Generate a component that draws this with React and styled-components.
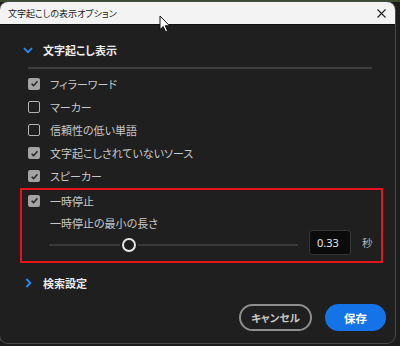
import React from "react";
import styled, { createGlobalStyle } from "styled-components";

const Global = createGlobalStyle`
  html, body { margin: 0; padding: 0; background: #1c1c1c; }
  body { width: 400px; height: 346px; overflow: hidden; font-family: "Noto Sans CJK JP", "Noto Sans", sans-serif; }
  * { box-sizing: border-box; }
`;

const Stage = styled.div`
  position: relative;
  width: 400px;
  height: 346px;
  padding-top: 2px;
  background: linear-gradient(to bottom, #3b4a2e 0, #3b4a2e 2px, #1c1c1c 2px);
`;

const Window = styled.div`
  width: 395px;
  height: 341px;
  border-radius: 8px;
  overflow: hidden;
  background: #1f1f1f;
  box-shadow: 0 0 0 1px #4a4a4a;
  display: flex;
  flex-direction: column;
  font-feature-settings: "palt";
`;

const TitleBar = styled.div`
  height: 23px;
  background: #f3f3f3;
  border-bottom: 1px solid #111;
  display: flex;
  align-items: center;
  justify-content: space-between;
  padding: 0 6px 0 8px;
  flex-shrink: 0;
`;

const Title = styled.span`
  font-size: 9px;
  color: #1a1a1a;
  line-height: 1;
`;

const CloseBtn = styled.div`
  width: 16px;
  height: 16px;
  display: flex;
  align-items: center;
  justify-content: center;
`;

const Body = styled.div`
  flex: 1;
  display: flex;
  flex-direction: column;
  padding: 15px 12px 12px 20px;
`;

const SectionHeader = styled.div`
  height: 20px;
  display: flex;
  align-items: center;
  gap: ${(p) => p.$gap || 10}px;
  padding-left: ${(p) => p.$indent || 3}px;
  margin-top: ${(p) => p.$mt || 0}px;
  color: #ececec;
  font-size: 11px;
  font-weight: 700;
`;

const Separator = styled.div`
  height: 2px;
  background: #3d3d3d;
  margin: 7px 11px 0 8px;
`;

const List = styled.div`
  margin-top: 3px;
  display: flex;
  flex-direction: column;
`;

const Row = styled.div`
  height: ${(p) => p.$h || 23.2}px;
  display: flex;
  align-items: center;
  gap: 10px;
  padding-left: ${(p) => p.$pl ?? 8}px;
  color: #c8c8c8;
  font-size: 11px;
`;

const Box = styled.span`
  width: 12px;
  height: 12px;
  border-radius: 2px;
  flex-shrink: 0;
  display: flex;
  align-items: center;
  justify-content: center;
  background: ${(p) => (p.$checked ? "#a3a3a3" : "transparent")};
  border: ${(p) => (p.$checked ? "none" : "1.6px solid #b4b4b4")};
`;

const Highlight = styled.div`
  border: 2px solid #e8141c;
  padding: 0 0 6px 6px;
  display: flex;
  flex-direction: column;
`;

const SubLabel = styled.div`
  height: 20px;
  margin-top: 1px;
  padding-left: 22px;
  display: flex;
  align-items: center;
  color: #c8c8c8;
  font-size: 11px;
`;

const SliderRow = styled.div`
  height: 25px;
  margin-top: -3px;
  display: flex;
  align-items: center;
  padding-left: 21px;
`;

const Track = styled.div`
  position: relative;
  width: 249px;
  height: 14px;
  margin-top: 6px;
  flex-shrink: 0;
`;

const TrackLine = styled.div`
  position: absolute;
  top: 6px;
  height: 2px;
  background: #3a3a3a;
`;

const Thumb = styled.div`
  position: absolute;
  top: 0;
  width: 14px;
  height: 14px;
  border-radius: 50%;
  border: 2px solid #e6e6e6;
  background: #1f1f1f;
`;

const NumberBox = styled.div`
  width: 42px;
  height: 25px;
  margin-left: 11px;
  background: #0b0b0b;
  border: 1px solid #363636;
  border-radius: 3px;
  display: flex;
  align-items: center;
  padding-left: 7px;
  color: #e4e4e4;
  font-family: "Noto Sans", "Liberation Sans", sans-serif;
  font-size: 11px;
`;

const Unit = styled.span`
  margin-left: 11px;
  color: #b8b8b8;
  font-size: 10.6px;
`;

const Footer = styled.div`
  margin-top: auto;
  display: flex;
  justify-content: flex-end;
  gap: 13px;
  margin-right: -3px;
`;

const Button = styled.button`
  height: 27px;
  width: ${(p) => p.$w}px;
  border-radius: 14px;
  font-family: inherit;
  font-feature-settings: "palt";
  font-weight: 700;
  font-size: ${(p) => (p.$primary ? 11.5 : 10.6)}px;
  display: flex;
  align-items: center;
  justify-content: center;
  padding: 0;
  background: ${(p) => (p.$primary ? "#1473e6" : "transparent")};
  color: ${(p) => (p.$primary ? "#ffffff" : "#c8c8c8")};
  border: ${(p) => (p.$primary ? "none" : "2px solid #8e8e8e")};
`;

const Cursor = styled.svg`
  position: absolute;
  left: 159px;
  top: 15px;
`;

const Check = () => (
  <svg width="9" height="9" viewBox="0 0 10 10">
    <path d="M1.8 5.2 L4 7.4 L8.3 2.6" fill="none" stroke="#262626" strokeWidth="1.7" />
  </svg>
);

const CheckBox = ({ checked }) => <Box $checked={checked}>{checked && <Check />}</Box>;

const ChevronDown = () => (
  <svg width="10" height="7" viewBox="0 0 10 7">
    <path d="M1 1.2 L5 5.2 L9 1.2" fill="none" stroke="#2b8cf0" strokeWidth="1.8" />
  </svg>
);

const ChevronRight = () => (
  <svg width="7" height="10" viewBox="0 0 7 10">
    <path d="M1.4 1 L5.4 5 L1.4 9" fill="none" stroke="#2b8cf0" strokeWidth="1.8" />
  </svg>
);

const items = [
  { label: "フィラーワード", checked: true },
  { label: "マーカー", checked: false },
  { label: "信頼性の低い単語", checked: false },
  { label: "文字起こしされていないソース", checked: true },
  { label: "スピーカー", checked: true },
];

export default function App() {
  const thumbX = 80;
  return (
    <Stage>
      <Global />
      <Window>
        <TitleBar>
          <Title>文字起こしの表示オプション</Title>
          <CloseBtn>
            <svg width="9" height="9" viewBox="0 0 9 9">
              <path d="M0.5 0.5 L8.5 8.5 M8.5 0.5 L0.5 8.5" stroke="#222" strokeWidth="1.1" />
            </svg>
          </CloseBtn>
        </TitleBar>
        <Body>
          <SectionHeader>
            <ChevronDown />
            <span>文字起こし表示</span>
          </SectionHeader>
          <Separator />
          <List>
            {items.map((it) => (
              <Row key={it.label}>
                <CheckBox checked={it.checked} />
                <span>{it.label}</span>
              </Row>
            ))}
          </List>
          <Highlight>
            <Row $h={22} $pl={0}>
              <CheckBox checked />
              <span>一時停止</span>
            </Row>
            <SubLabel>一時停止の最小の長さ</SubLabel>
            <SliderRow>
              <Track>
                <TrackLine style={{ left: 0, width: thumbX - 9 }} />
                <Thumb style={{ left: thumbX - 7 }} />
                <TrackLine style={{ left: thumbX + 9, right: 0 }} />
              </Track>
              <NumberBox>0.33</NumberBox>
              <Unit>秒</Unit>
            </SliderRow>
          </Highlight>
          <SectionHeader $mt={10} $indent={5} $gap={11}>
            <ChevronRight />
            <span>検索設定</span>
          </SectionHeader>
          <Footer>
            <Button $w={73}>キャンセル</Button>
            <Button $w={61} $primary>保存</Button>
          </Footer>
        </Body>
      </Window>
      <Cursor width="12" height="18" viewBox="0 0 12 18">
        <path d="M1 1 L1 14.5 L4.2 11.6 L6.6 16.8 L8.6 15.9 L6.3 10.8 L10.6 10.8 Z" fill="#fafafa" stroke="#111" strokeWidth="1" strokeLinejoin="round" />
      </Cursor>
    </Stage>
  );
}
